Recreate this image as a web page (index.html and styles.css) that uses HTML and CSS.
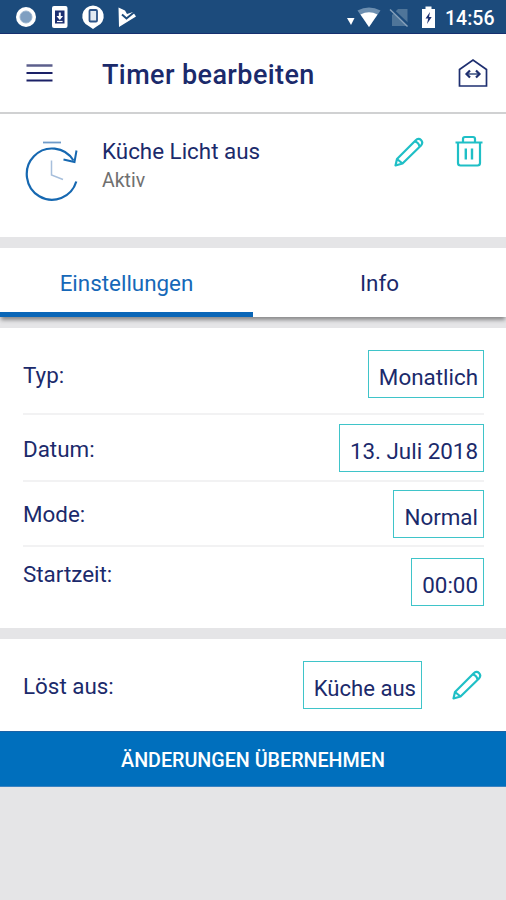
FILE: index.html
```html
<!DOCTYPE html>
<html lang="de">
<head>
    <meta charset="utf-8">
    <title>Timer bearbeiten</title>
    <link rel="stylesheet" href="styles.css">
</head>
<body>

    <div class="status-bar">
        <svg class="status-left" width="140" height="34" viewBox="0 0 140 34">
            <circle cx="26" cy="17" r="10" fill="#fff"/>
            <circle cx="26" cy="17" r="6" fill="#7f9fc1" stroke="#9ab4cf" stroke-width="1"/>
            <rect x="52" y="6" width="15.5" height="22" rx="2" fill="#fff"/>
            <rect x="55" y="10.500" width="9.5" height="13" fill="#1c2f70"/>
            <path d="M59.800 12.500v4" stroke="#fff" stroke-width="2"/>
            <path d="M56.500 16h6.600l-3.300 4z" fill="#fff"/>
            <path d="M57 21.500h5.600" stroke="#fff" stroke-width="1.200"/>
            <path d="M93 5.500a10.800 10.800 0 0 1 4 20.800L93 29l-4-2.700a10.800 10.800 0 0 1 4-20.800z" fill="#fff"/>
            <rect x="89.500" y="10" width="7.500" height="11.500" rx="1" fill="#e3eaf2" stroke="#2d5488" stroke-width="1.800"/>
            <path d="M118.500 7.500L125 10.500L127 14L133 12L136 16.500L119 27z" fill="#fff"/>
            <path d="M122 14.500l4.500 4L135 11.500" fill="none" stroke="#1c4b7c" stroke-width="2"/>
        </svg>
        <div class="status-right">
            <svg width="96" height="34" viewBox="0 0 96 34">
                <path d="M2 18h7.500l-3.500 7z" fill="#fff"/>
                <path d="M12.500 10.500q11.500-6 23 0L24 27z" fill="#6d8fb0"/>
                <path d="M15.500 14.500q8.500-4.500 17 0L24 27z" fill="#fff"/>
                <path d="M47 15l6-6h9.500v17H47z" fill="#4f7599"/>
                <path d="M46 9l18 17" stroke="#1c4b7c" stroke-width="3.500"/>
                <path d="M45 9.500L62.500 26.500" stroke="#87a1bb" stroke-width="1.500"/>
                <path d="M77 9h3.500V6.500h6V9H90v19H77z" fill="#fff"/>
                <path d="M85 12l-4.500 6.500h2.700L82 24l4.700-7H84z" fill="#1c2f70"/>
            </svg>
            <span class="clock">14:56</span>
        </div>
    </div>

    <div class="header">
        <svg class="menu-icon" width="27" height="20" viewBox="0 0 27 20">
            <path d="M0.500 2.500h26" stroke="#5c5f8c" stroke-width="2.500"/>
            <path d="M0.500 10h26M0.500 17.500h26" stroke="#1b2167" stroke-width="2.200"/>
        </svg>
        <h1>Timer bearbeiten</h1>
        <svg class="home-icon" width="30" height="30" viewBox="0 0 30 30">
            <path d="M1.500 28V11.500L15 2l13.500 9.500V28z" fill="none" stroke="#1e2f70" stroke-width="1.700"/>
            <path d="M9 16h12" stroke="#5a6c94" stroke-width="1.800"/>
            <path d="M12 12.500L8.500 16l3.500 3.500M18 12.500l3.500 3.500-3.500 3.500" fill="none" stroke="#1e2f70" stroke-width="2.200"/>
        </svg>
    </div>

    <div class="timer">
        <svg class="timer-icon" width="56" height="64" viewBox="0 0 56 64">
            <path d="M19 4.500h18" stroke="#6f9bc9" stroke-width="1.800"/>
            <path d="M49.500 22.500A25.300 25.600 0 1 0 52.300 43.500" fill="none" stroke="#1668b1" stroke-width="2.200"/>
            <path d="M39.500 21.500l11 2.500L52.500 12.500" fill="none" stroke="#1668b1" stroke-width="2"/>
            <path d="M27.500 22.500V37l11.500 4.500" fill="none" stroke="#a7bfdc" stroke-width="1.500"/>
        </svg>
        <div class="timer-text">
            <div class="timer-name">Küche Licht aus</div>
            <div class="timer-state">Aktiv</div>
        </div>
        <svg class="edit-icon" width="30" height="30" viewBox="0 0 30 30">
            <path d="M1.500 28.500L3 22 21.500 3.500q3-3 5.500-0.500t0 5.500L8.500 26.500zM3 22l5.500 4.500M20.500 4.500q4 0.500 5 5" fill="none" stroke="#1fbfc6" stroke-width="2.200" stroke-linejoin="round"/>
        </svg>
        <svg class="delete-icon" width="28" height="32" viewBox="0 0 28 32">
            <path d="M0.500 7.500h27M8 7.500V4q0-2 2-2h8q2 0 2 2v3.500M3 7.500V28q0 2.500 2.500 2.500h17q2.500 0 2.500-2.500V7.500" fill="none" stroke="#1fbfc6" stroke-width="2.200"/>
            <path d="M10.800 13.500v11M17 13.500v11" stroke="#1fbfc6" stroke-width="2.400"/>
        </svg>
    </div>

    <div class="tabs">
        <div class="tab active">Einstellungen</div>
        <div class="tab">Info</div>
    </div>

    <div class="settings">
        <div class="row row-type">
            <label>Typ:</label>
            <div class="value">Monatlich</div>
        </div>
        <div class="row row-date">
            <label>Datum:</label>
            <div class="value">13. Juli 2018</div>
        </div>
        <div class="row row-mode">
            <label>Mode:</label>
            <div class="value">Normal</div>
        </div>
        <div class="row row-start">
            <label>Startzeit:</label>
            <div class="value">00:00</div>
        </div>
    </div>

    <div class="trigger">
        <label>Löst aus:</label>
        <div class="value">Küche aus</div>
        <svg class="edit-icon" width="30" height="30" viewBox="0 0 30 30">
            <path d="M1.500 28.500L3 22 21.500 3.500q3-3 5.500-0.500t0 5.500L8.500 26.500zM3 22l5.500 4.500M20.500 4.500q4 0.500 5 5" fill="none" stroke="#1fbfc6" stroke-width="2.200" stroke-linejoin="round"/>
        </svg>
    </div>

    <button type="button">ÄNDERUNGEN ÜBERNEHMEN</button>

</body>
</html>
```

FILE: styles.css
```css
* {
    box-sizing: border-box;
}

body {
    font-family: Roboto, "Liberation Sans", sans-serif;
    font-size: 22.4px;
    line-height: 26px;
    color: #1b2a6b;
    background-color: #e5e5e7;
    margin: 0;
}

.status-bar {
    display: flex;
    justify-content: space-between;
    height: 34px;
    background-color: #1c4b7c;
    border-bottom: 1px solid #17306f;
    overflow: hidden;
}

.status-right {
    display: flex;
    padding-right: 11px;
}

.clock {
    width: 50px;
    margin-left: 4px;
    color: #fff;
    font-size: 19.5px;
    font-weight: 500;
    line-height: 37px;
}

.header {
    display: flex;
    align-items: center;
    height: 80px;
    padding: 0 18px 0 26px;
    background-color: #fff;
    border-bottom: 2px solid #d0d1d2;
}

h1 {
    flex: 1;
    margin: 4px 0 0 49px;
    font-size: 27px;
    font-weight: 500;
    line-height: 32px;
    letter-spacing: 0.4px;
}

.timer {
    display: flex;
    align-items: flex-start;
    height: 123px;
    padding: 24px 23px 0 24px;
    background-color: #fff;
}

.timer-text {
    flex: 1;
    margin-left: 22px;
}

.timer-state {
    margin-top: 4px;
    color: #707070;
    font-size: 19.5px;
}

.timer .delete-icon {
    margin: -3px 0 0 31px;
}

.timer .edit-icon {
    margin-top: -1px;
}

.tabs {
    display: flex;
    height: 69px;
    margin-top: 11px;
    background-color: #fff;
    box-shadow: 0 4px 4px -1px rgba(0, 0, 0, 0.4);
}

.tab {
    flex: 1;
    padding-top: 22px;
    text-align: center;
}

.tab.active {
    color: #1668b8;
    border-bottom: 5px solid #0a66b7;
}

.settings {
    height: 300px;
    margin-top: 11px;
    padding: 0 22px 0 23px;
    background-color: #fff;
}

.row {
    display: flex;
    justify-content: space-between;
    align-items: flex-start;
    border-bottom: 2px solid #f2f2f3;
}

.row label {
    margin-top: 12px;
}

.value {
    height: 48px;
    padding: 13px 5px 0 10px;
    border: 1.5px solid #3fc4c9;
}

.row-type {
    height: 87px;
    padding-top: 22px;
}

.row-date {
    height: 67px;
    padding-top: 9px;
}

.row-mode {
    height: 65px;
    padding-top: 8px;
}

.row-mode label {
    margin-top: 11px;
}

.row-start {
    padding-top: 11px;
    border-bottom: none;
}

.row-start label {
    margin-top: 3px;
}

.trigger {
    display: flex;
    align-items: center;
    height: 92px;
    margin-top: 11px;
    padding: 0 24px 0 23px;
    background-color: #fff;
}

.trigger label {
    flex: 1;
    margin-top: 1px;
}

.trigger .value {
    font-size: 22.1px;
}

.trigger .edit-icon {
    margin-left: 30px;
}

button {
    display: block;
    width: 100%;
    height: 56px;
    padding: 2px 0 0;
    background-color: #006fbd;
    color: #fff;
    border: none;
    border-top: 1px solid #1b62a5;
    border-bottom: 1px solid #3b83c2;
    font-family: inherit;
    font-size: 19.7px;
    font-weight: 500;
}
```
